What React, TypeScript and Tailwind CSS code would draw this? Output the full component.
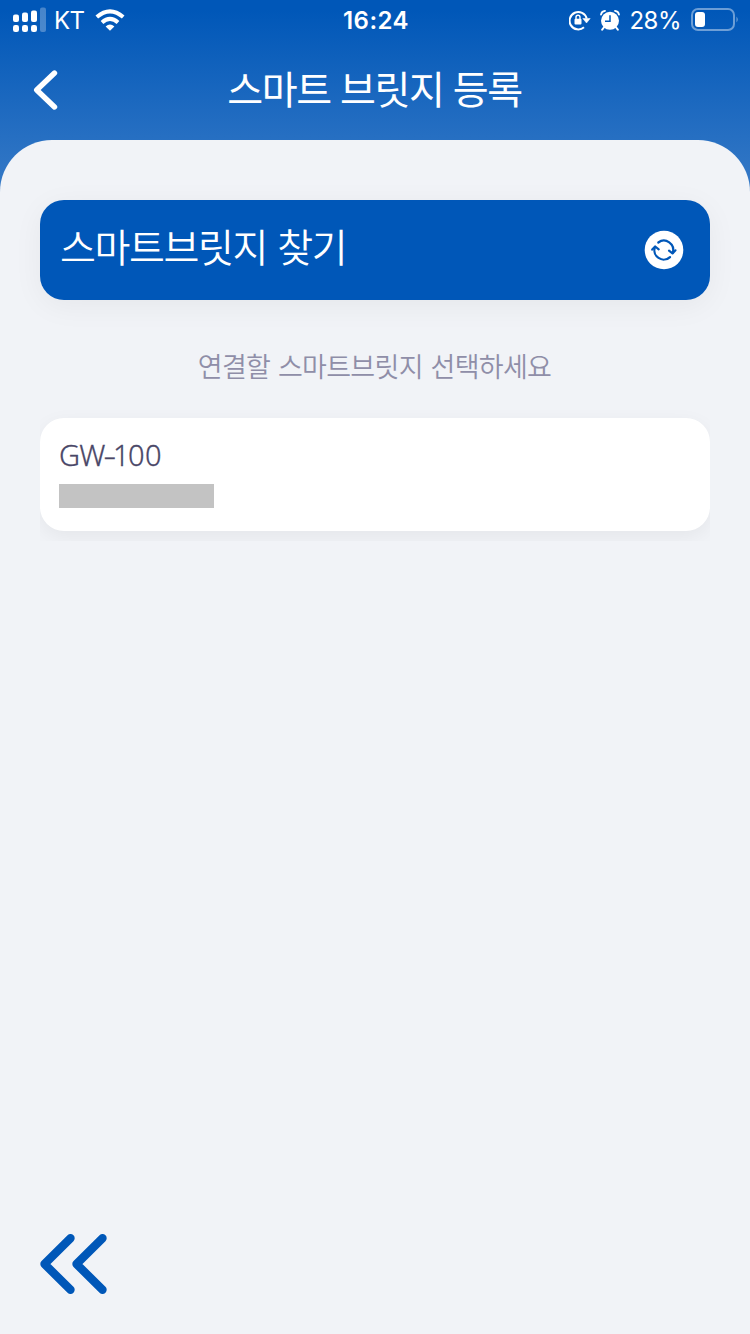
const kr = "font-['Noto_Sans_CJK_KR',sans-serif]";

function StatusBar() {
  return (
    <div className="flex h-10 items-center justify-between pl-[13px] pr-[11px] font-['Inter',sans-serif] text-white">
      <div className="flex w-[300px] items-center">
        <svg width="33" height="26" viewBox="0 0 33 26" fill="#fff" className="block">
          <rect x="0" y="7.500" width="6" height="7.500" rx="2" />
          <rect x="9" y="5.500" width="6" height="9.500" rx="2" />
          <rect x="18" y="3.500" width="6" height="11.500" rx="2" />
          <rect x="0" y="18" width="6" height="7" rx="2.200" />
          <rect x="9" y="18" width="6" height="7" rx="2.200" />
          <rect x="18" y="18" width="6" height="7" rx="2.200" />
          <rect x="27" y="0.500" width="6" height="24.500" rx="2" opacity=".28" />
        </svg>
        <span className="ml-[8px] pt-[2px] text-[24px] leading-10 tracking-[-0.6px]">KT</span>
        <svg width="30" height="22" viewBox="0 0 30 22" className="ml-[11px] block" fill="none" stroke="#fff" strokeWidth="4">
          <path d="M1.800 8.100Q15-3.300 28.200 8.100" />
          <path d="M7 13.500Q15 6.300 23 13.500" />
          <path d="M10.600 17.400Q15 13.700 19.400 17.400L15 21.700Z" fill="#fff" stroke="none" />
        </svg>
      </div>
      <span className="pt-[2px] text-[24px] font-semibold leading-10 tracking-[0.45px]">16:24</span>
      <div className="flex w-[300px] items-center justify-end">
        <svg width="22" height="22" viewBox="0 0 22 22" fill="none" className="block" stroke="#fff" strokeWidth="2">
          <path d="M15 18.300A8.700 8.700 0 1 1 17.700 9.500" />
          <path d="M13.800 9.500H21.200L17.500 14Z" fill="#fff" stroke="#fff" strokeWidth=".5" />
          <rect x="5.500" y="9.800" width="7" height="5.800" rx="1" fill="#fff" stroke="none" />
          <path d="M7 10.300V8.300a2 2 0 0 1 4 0v2" strokeWidth="1.400" />
        </svg>
        <svg width="20" height="21" viewBox="0 0 20 21" className="ml-[9px] block">
          <circle cx="10" cy="10.800" r="9" fill="#fff" />
          <path d="M1 4.600Q1.500 1.300 5 .900M15 .900Q18.500 1.300 19 4.600" stroke="#fff" strokeWidth="1.800" strokeLinecap="round" fill="none" />
          <path d="M4.200 17l-2 2.600M15.800 17l2 2.600" stroke="#fff" strokeWidth="2" strokeLinecap="round" fill="none" />
          <path d="M10 5.300v5.900H5" stroke="#0058b8" strokeWidth="1.500" fill="none" />
        </svg>
        <span className="ml-[9px] pt-[2px] text-[24px] leading-10 tracking-[-0.5px]">28%</span>
        <svg width="48" height="24" viewBox="0 0 48 24" className="ml-[10px] block">
          <rect x="1" y="1" width="42" height="21" rx="6" fill="none" stroke="#fff" strokeWidth="2" opacity=".42" />
          <rect x="4" y="4" width="10" height="15" rx="3" fill="#fff" />
          <path d="M45.500 8.500q2.500 3 0 6z" fill="#fff" opacity=".45" />
        </svg>
      </div>
    </div>
  );
}

export default function App() {
  return (
    <div className={`flex h-[1334px] w-[750px] flex-col overflow-hidden bg-[linear-gradient(180deg,#0057b8_0px,#0057b8_10px,#397bc7_200px)] ${kr}`}>
      <StatusBar />
      <header className="flex h-[100px] items-center px-[33px]">
        <button aria-label="뒤로" className="flex w-[60px]">
          <svg width="25" height="40" viewBox="0 0 25 40" fill="none" className="block">
            <path d="M21.500 3L3.700 20L21.500 37" stroke="#fff" strokeWidth="5.400" strokeLinecap="round" strokeLinejoin="round" />
          </svg>
        </button>
        <h1 className="flex-1 whitespace-nowrap pb-[6px] pr-[1px] text-center text-[39px] font-normal leading-[94px] tracking-[-1.4px] [word-spacing:2px] text-white">스마트 브릿지 등록</h1>
        <div className="w-[60px]" />
      </header>
      <main className="flex flex-1 flex-col rounded-t-[52px] bg-[#f1f3f7] px-10 pt-[60px]">
        <button className="flex h-[100px] items-center justify-between rounded-3xl bg-[#0057b8] pl-[20px] pr-[26px] text-white shadow-[0_6px_30px_rgba(0,0,0,0.05)]">
          <span className="pb-[10px] text-[39px] font-[350] leading-[90px] tracking-[-1.4px] [word-spacing:3px]">스마트브릿지 찾기</span>
          <svg width="40" height="40" viewBox="0 0 40 40" fill="none" className="block">
            <circle cx="20" cy="20" r="19.300" fill="#fff" />
            <g stroke="#0057b8" strokeWidth="2.200" strokeLinecap="round" strokeLinejoin="round">
              <path d="M14.300 12.500A9.300 9.300 0 0 1 28.700 22.800" />
              <path d="M25 20.600L28.500 23.400L31.500 20.300" />
              <path d="M26 27.100A9.300 9.300 0 0 1 11 17" />
              <path d="M8.200 19.600L11.200 16.500L14.700 19.300" />
            </g>
          </svg>
        </button>
        <p className="mt-[38px] h-14 whitespace-nowrap pr-[1px] text-center text-[27px] font-[350] leading-[56px] tracking-[-0.700px] [word-spacing:2.400px] text-[#8f8ea8]">연결할 스마트브릿지 선택하세요</p>
        <div className="mt-[14px] h-[133px] overflow-hidden pt-[10px]">
          <div className="flex h-[113px] flex-col rounded-3xl bg-white pl-[19px] pt-[18px] shadow-[0_6px_20px_rgba(0,0,0,0.055)]">
            <span className="h-10 font-['Noto_Sans',sans-serif] text-[29px] font-[350] leading-[38px] tracking-[-0.8px] text-[#4a4767] [-webkit-text-stroke:0.3px_#4a4767]">
              GW<span className="inline-block origin-center scale-x-[1.35]">-</span><span className="tracking-[-1.5px]">1</span><span className="tracking-[0.400px]">00</span>
            </span>
            <span className="mt-[8px] h-6 w-[155px] bg-[#c3c3c3]" />
          </div>
        </div>
        <button aria-label="이전" className="mb-10 mt-auto flex">
          <svg width="67" height="60" viewBox="0 0 67 60" fill="none" className="block" stroke="#0057b8" strokeWidth="8.400" strokeLinecap="round" strokeLinejoin="round">
            <path d="M30.500 4.200L4.500 30L30.500 55.800M62.500 4.200L36.500 30L62.500 55.800" />
          </svg>
        </button>
      </main>
    </div>
  );
}
